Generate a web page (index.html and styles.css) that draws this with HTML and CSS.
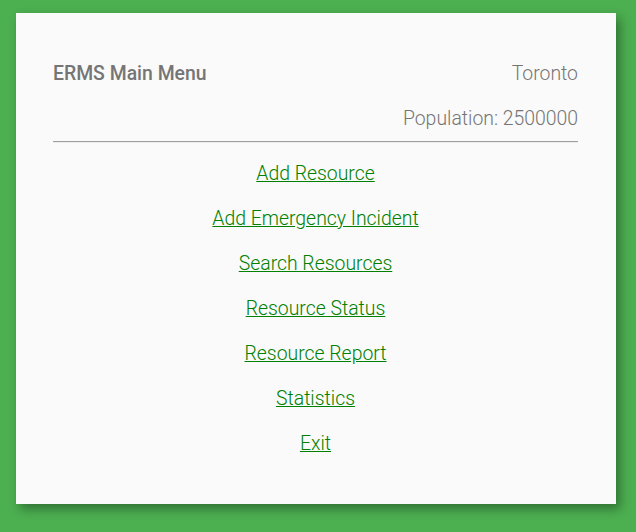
FILE: index.html
```html
<!DOCTYPE html>
<html>
<head>
<meta charset="utf-8">
<link rel="stylesheet" href="styles.css">
</head>
<body>
<div class="card">
  <div class="header">
    <div class="title">ERMS Main Menu</div>
    <div class="info">
      <div class="row">Toronto</div>
      <div class="row">Population: 2500000</div>
    </div>
  </div>
  <nav class="menu">
    <a href="#">Add Resource</a>
    <a href="#">Add Emergency Incident</a>
    <a href="#">Search Resources</a>
    <a href="#">Resource Status</a>
    <a href="#">Resource Report</a>
    <a href="#">Statistics</a>
    <a href="#">Exit</a>
  </nav>
</div>
</body>
</html>
```
FILE: styles.css
```css
html, body {
  margin: 0;
  padding: 0;
}
body {
  background: #4caf50;
  font-family: Roboto, "Liberation Sans", sans-serif;
  width: 636px;
  height: 532px;
  padding: 13px 20px 0 16px;
  box-sizing: border-box;
}
.card {
  width: 600px;
  height: 491px;
  box-sizing: border-box;
  background: #fafafa;
  padding: 38px 38px 0 37px;
  box-shadow: 4px 5px 10px rgba(0, 0, 0, 0.35);
}
.header {
  display: flex;
  justify-content: space-between;
  border-bottom: 1px solid #9e9e9e;
  box-shadow: 0 1px 0 #eeeeee;
}
.title {
  font-size: 19.4px;
  font-weight: 500;
  color: #757575;
  line-height: 45px;
}
.info {
  text-align: right;
  color: #757575;
  font-weight: 300;
  font-size: 19.4px;
}
.row {
  line-height: 45px;
}
.menu {
  display: flex;
  flex-direction: column;
  align-items: center;
  padding-top: 9px;
}
.menu a {
  color: #008000;
  font-weight: 300;
  font-size: 19.4px;
  line-height: 45px;
  text-decoration: underline;
}
```
